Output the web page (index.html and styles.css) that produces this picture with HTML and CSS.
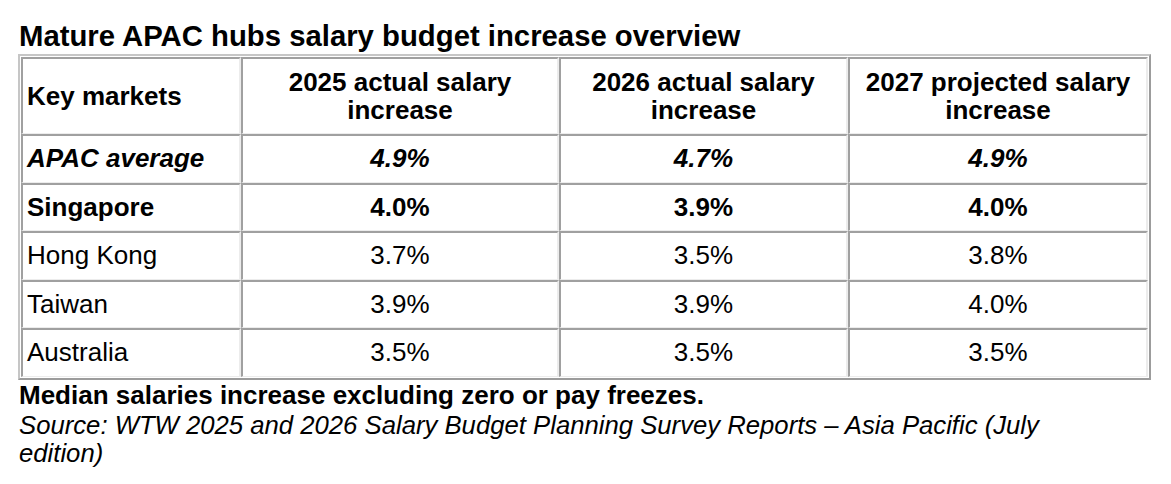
FILE: index.html
```html
<!DOCTYPE html>
<html lang="en">
<head>
<meta charset="utf-8">
<title>Mature APAC hubs salary budget increase overview</title>
<link rel="stylesheet" href="styles.css">
</head>
<body>
<div class="page">
  <h1 class="title">Mature APAC hubs salary budget increase overview</h1>
  <table class="grid">
    <thead>
      <tr>
        <th class="c1 left">Key markets</th>
        <th class="c2">2025 actual salary increase</th>
        <th class="c3">2026 actual salary increase</th>
        <th class="c4">2027 projected salary increase</th>
      </tr>
    </thead>
    <tbody>
      <tr class="avg">
        <td class="left">APAC average</td>
        <td>4.9%</td>
        <td>4.7%</td>
        <td>4.9%</td>
      </tr>
      <tr class="hl">
        <td class="left">Singapore</td>
        <td>4.0%</td>
        <td>3.9%</td>
        <td>4.0%</td>
      </tr>
      <tr>
        <td class="left">Hong Kong</td>
        <td>3.7%</td>
        <td>3.5%</td>
        <td>3.8%</td>
      </tr>
      <tr>
        <td class="left">Taiwan</td>
        <td>3.9%</td>
        <td>3.9%</td>
        <td>4.0%</td>
      </tr>
      <tr>
        <td class="left">Australia</td>
        <td>3.5%</td>
        <td>3.5%</td>
        <td>3.5%</td>
      </tr>
    </tbody>
  </table>
  <p class="note-bold">Median salaries increase excluding zero or pay freezes.</p>
  <p class="note-src">Source: WTW 2025 and 2026 Salary Budget Planning Survey Reports – Asia Pacific (July edition)</p>
</div>
</body>
</html>
```
FILE: styles.css
```css
html, body {
  margin: 0;
  padding: 0;
  background: #ffffff;
}

body {
  font-family: "Liberation Sans", Arial, sans-serif;
  color: #000000;
}

.page {
  padding: 19px 0 0 18px;
}

.title {
  margin: 0;
  padding-left: 1px;
  font-size: 29.3px;
  font-weight: bold;
  line-height: 33px;
}

.grid {
  margin-top: 2px;
  width: 1133px;
  table-layout: fixed;
  border-collapse: separate;
  border-spacing: 0;
  border: 2px solid;
  border-color: #c6c6c6 #9c9c9c #9c9c9c #c6c6c6;
  padding: 1px;
  font-size: 26px;
}

.grid th,
.grid td {
  border-style: solid;
  border-width: 2px 2px 1px 2px;
  border-color: #a0a0a0 #ececec #ececec #a0a0a0;
  padding: 8px 5px;
  line-height: 29.6px;
  text-align: center;
  vertical-align: middle;
  font-weight: normal;
}

.grid th {
  font-weight: bold;
  padding-top: 9px;
  padding-bottom: 9px;
  line-height: 28px;
}

.grid .left {
  text-align: left;
  padding-left: 4px;
}

.c1 { width: 207px; }
.c2 { width: 304px; }
.c3 { width: 275px; }
.c4 { width: 286px; }

.avg td {
  font-weight: bold;
  font-style: italic;
}

.hl td {
  font-weight: bold;
}

.note-bold,
.note-src {
  margin: 0;
  padding-left: 1px;
  max-width: 1100px;
}

.note-bold {
  font-size: 26px;
  line-height: 30px;
  font-weight: bold;
}

.note-src {
  margin-top: 1px;
  font-size: 25.7px;
  line-height: 28px;
  font-style: italic;
}
```
